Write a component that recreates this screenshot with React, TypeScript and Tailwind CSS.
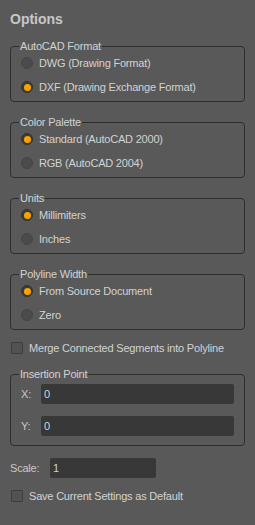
import React from 'react';

/* ── Bits ─────────────────────────────────────────── */

function Radio({ checked, label }: { checked?: boolean; label: string }) {
  return (
    <label className="flex h-5 items-center gap-[6px]">
      {checked ? (
        <span className="flex h-3 w-3 items-center justify-center rounded-full border border-[#333333] bg-[#3a3a3a]">
          <span className="h-[7px] w-[7px] rounded-full bg-[#ffa200]" />
        </span>
      ) : (
        <span className="h-3 w-3 rounded-full border border-[#454545] bg-[#4b4b4b]" />
      )}
      <span>{label}</span>
    </label>
  );
}

function Check({ label }: { label: string }) {
  return (
    <label className="flex h-5 items-center gap-[6px] pl-px">
      <span className="h-3 w-3 rounded-[1px] border border-[#3d3d3d] bg-[#525252]" />
      <span>{label}</span>
    </label>
  );
}

function Group({ title, children, className = '' }: { title: string; children: React.ReactNode; className?: string }) {
  return (
    <fieldset className={`rounded-[4px] border border-[#2e2e2e] pl-[10px] pr-[10px] ${className}`}>
      <legend className="-ml-[2px] px-px leading-[14px]">{title}</legend>
      {children}
    </fieldset>
  );
}

function Field({ value, className = '' }: { value: string; className?: string }) {
  return (
    <div className={`flex h-5 items-center rounded-[2px] bg-[#383838] pl-[3px] text-[#d2d2d2] ${className}`}>
      {value}
    </div>
  );
}

/* ── Panel ────────────────────────────────────────── */

export default function App() {
  return (
    <div
      className="h-[525px] w-[255px] bg-[#595959] px-[10px] pt-[11px] text-[11px] tracking-[-0.2px] text-[#d2d2d2]"
      style={{ fontFamily: '"Liberation Sans", Arial, sans-serif' }}
    >
      <h1 className="text-[14px] font-bold leading-[17px] tracking-normal text-[#c7c7c7]">Options</h1>

      <Group title="AutoCAD Format" className="mt-[11px] pb-1">
        <div className="flex flex-col gap-1">
          <Radio label="DWG (Drawing Format)" />
          <Radio checked label="DXF (Drawing Exchange Format)" />
        </div>
      </Group>

      <Group title="Color Palette" className="mt-[13px] pb-1">
        <div className="flex flex-col gap-1">
          <Radio checked label="Standard (AutoCAD 2000)" />
          <Radio label="RGB (AutoCAD 2004)" />
        </div>
      </Group>

      <Group title="Units" className="mt-[13px] pb-1">
        <div className="flex flex-col gap-1">
          <Radio checked label="Millimiters" />
          <Radio label="Inches" />
        </div>
      </Group>

      <Group title="Polyline Width" className="mt-[13px] pb-1">
        <div className="flex flex-col gap-1">
          <Radio checked label="From Source Document" />
          <Radio label="Zero" />
        </div>
      </Group>

      <div className="mt-2">
        <Check label="Merge Connected Segments into Polyline" />
      </div>

      <Group title="Insertion Point" className="mt-[9px] pb-[9px]">
        <div className="flex flex-col gap-3 pt-[3px]">
          <div className="flex items-center">
            <span className="w-[20px] text-[#c8c8c8]">X:</span>
            <Field value="0" className="flex-1" />
          </div>
          <div className="flex items-center">
            <span className="w-[20px] text-[#c8c8c8]">Y:</span>
            <Field value="0" className="flex-1" />
          </div>
        </div>
      </Group>

      <div className="mt-3 flex items-center">
        <span className="w-[40px] text-[#c8c8c8]">Scale:</span>
        <Field value="1" className="w-[106px]" />
      </div>

      <div className="mt-2">
        <Check label="Save Current Settings as Default" />
      </div>
    </div>
  );
}
